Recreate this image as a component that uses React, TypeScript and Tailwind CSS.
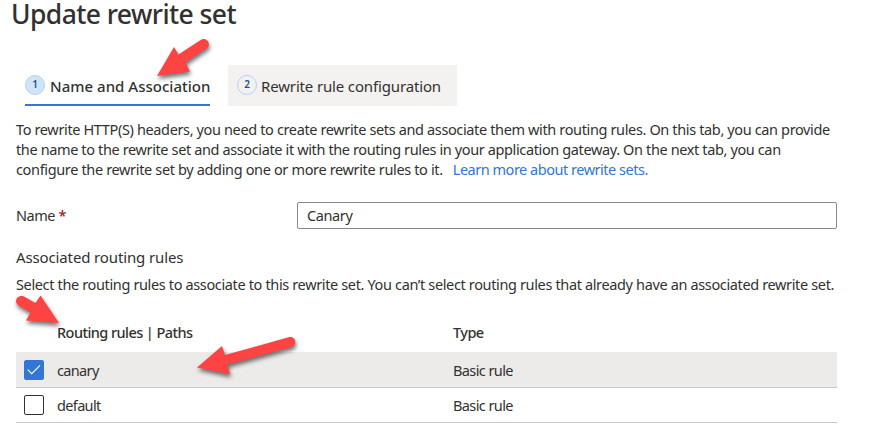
const text = 'whitespace-nowrap text-[14.5px] leading-5';
const tabText = 'whitespace-nowrap text-[15px] leading-5';

type RowProps = { name: string; type: string; checked?: boolean };

function RuleRow({ name, type, checked = false }: RowProps) {
  return (
    <div
      className={`flex items-center border-b border-[#c8c6c4] ${checked ? 'h-[36px] bg-[#edebe9]' : 'h-[35px]'}`}
    >
      <span
        className={`ml-2 flex size-5 shrink-0 items-center justify-center rounded-[2px] border ${checked ? 'border-[#3276d8] bg-[#3276d8]' : 'border-[#323130] bg-white'}`}
      >
        {checked && (
          <svg width="14" height="12" viewBox="0 0 14 12" fill="none" stroke="#fff" strokeWidth="1.1">
            <path d="M0.7 5.7 4.7 9.7 13 1.4" />
          </svg>
        )}
      </span>
      <span className={`${text} ml-[13px] w-[396px] tracking-[-0.65px]`}>{name}</span>
      <span className={`${text} tracking-[-0.6px]`}>{type}</span>
    </div>
  );
}

function Arrows() {
  return (
    <svg
      className="pointer-events-none absolute top-0 left-0 h-[433px] w-[872px] drop-shadow-[1px_3px_2px_rgba(0,0,0,0.55)]"
      viewBox="0 0 872 433"
      fill="#fe4442"
    >
      <path d="M157 76 174 47 178.5 54.5 201 39.7C206 36.5 212 43.5 207 48L185.5 62.5 190 71.5Z" />
      <path d="M59 323 26 320.5 30.5 312.5 18.5 305.5C13 301.5 17.5 294 24 296.5L35.5 303 40.5 295.5Z" />
      <path d="M197 367.5 222 346 225 355 288.5 337.3C296 335.5 298 345.5 291 347.3L227.5 364.5 230 374.5Z" />
    </svg>
  );
}

export default function App() {
  return (
    <main className="relative h-[433px] w-[872px] bg-white font-['Noto_Sans',sans-serif] text-[#323130]">
      <h1 className="ml-[11px] h-[65px] text-[26.5px] leading-[28px] font-medium tracking-[-0.58px] whitespace-nowrap">
        Update rewrite set
      </h1>
      <nav className="ml-[25px] flex h-[41px] gap-[18px]">
        <div className="flex w-[185px] items-center border-b-2 border-[#3276d8]">
          <span className="flex size-5 shrink-0 items-center justify-center rounded-full border border-[#b4d0fb] bg-[#cfe4f5] text-[10px] font-semibold text-[#26518f]">
            1
          </span>
          <span className={`${tabText} ml-[5px] pt-[2px] font-medium tracking-[0.02px]`}>Name and Association</span>
        </div>
        <div className="flex w-[229px] items-center bg-[#f3f2f1] pb-[2px] pl-[9px]">
          <span className="flex size-5 shrink-0 items-center justify-center rounded-full border border-[#b4d0fb] text-[10px] font-semibold text-[#26518f]">
            2
          </span>
          <span className={`${tabText} ml-[4px] pt-[2px] tracking-[-0.15px]`}>Rewrite rule configuration</span>
        </div>
      </nav>
      <div className="mt-[13px] ml-4 w-[821px]">
        <div className={text}>
          <p className="tracking-[-0.365px]">
            To rewrite HTTP(S) headers, you need to create rewrite sets and associate them with routing rules. On this tab, you can provide
          </p>
          <p className="tracking-[-0.375px]">
            the name to the rewrite set and associate it with the routing rules in your application gateway. On the next tab, you can
          </p>
          <p className="tracking-[-0.35px]">
            <span>configure the rewrite set by adding one or more rewrite rules to it.</span>
            <a className="ml-[10px] tracking-[-0.48px] text-[#3276d8]">Learn more about rewrite sets.</a>
          </p>
        </div>
        <div className="mt-[23px] flex h-[27px] items-center">
          <label className={`${text} w-[281px] pb-[2px] tracking-[-0.45px]`}>
            Name <span className="font-semibold text-[#a4262c]">*</span>
          </label>
          <div className="flex h-[27px] w-[540px] items-center rounded-[2px] border border-[#8a8886] pb-[2px] pl-[9px]">
            <span className={`${text} tracking-[-0.4px]`}>Canary</span>
          </div>
        </div>
        <h2 className={`${tabText} mt-[18px] tracking-[-0.13px]`}>Associated routing rules</h2>
        <p className={`${text} mt-[7px] tracking-[-0.36px]`}>
          Select the routing rules to associate to this rewrite set. You can’t select routing rules that already have an associated rewrite set.
        </p>
        <div className="mt-[18px] flex h-[40px] items-center pl-[41px] font-medium">
          <span className={`${text} w-[396px] tracking-[-0.56px]`}>Routing rules | Paths</span>
          <span className={`${text} tracking-[-0.56px]`}>Type</span>
        </div>
        <RuleRow name="canary" type="Basic rule" checked />
        <RuleRow name="default" type="Basic rule" />
      </div>
      <Arrows />
    </main>
  );
}
